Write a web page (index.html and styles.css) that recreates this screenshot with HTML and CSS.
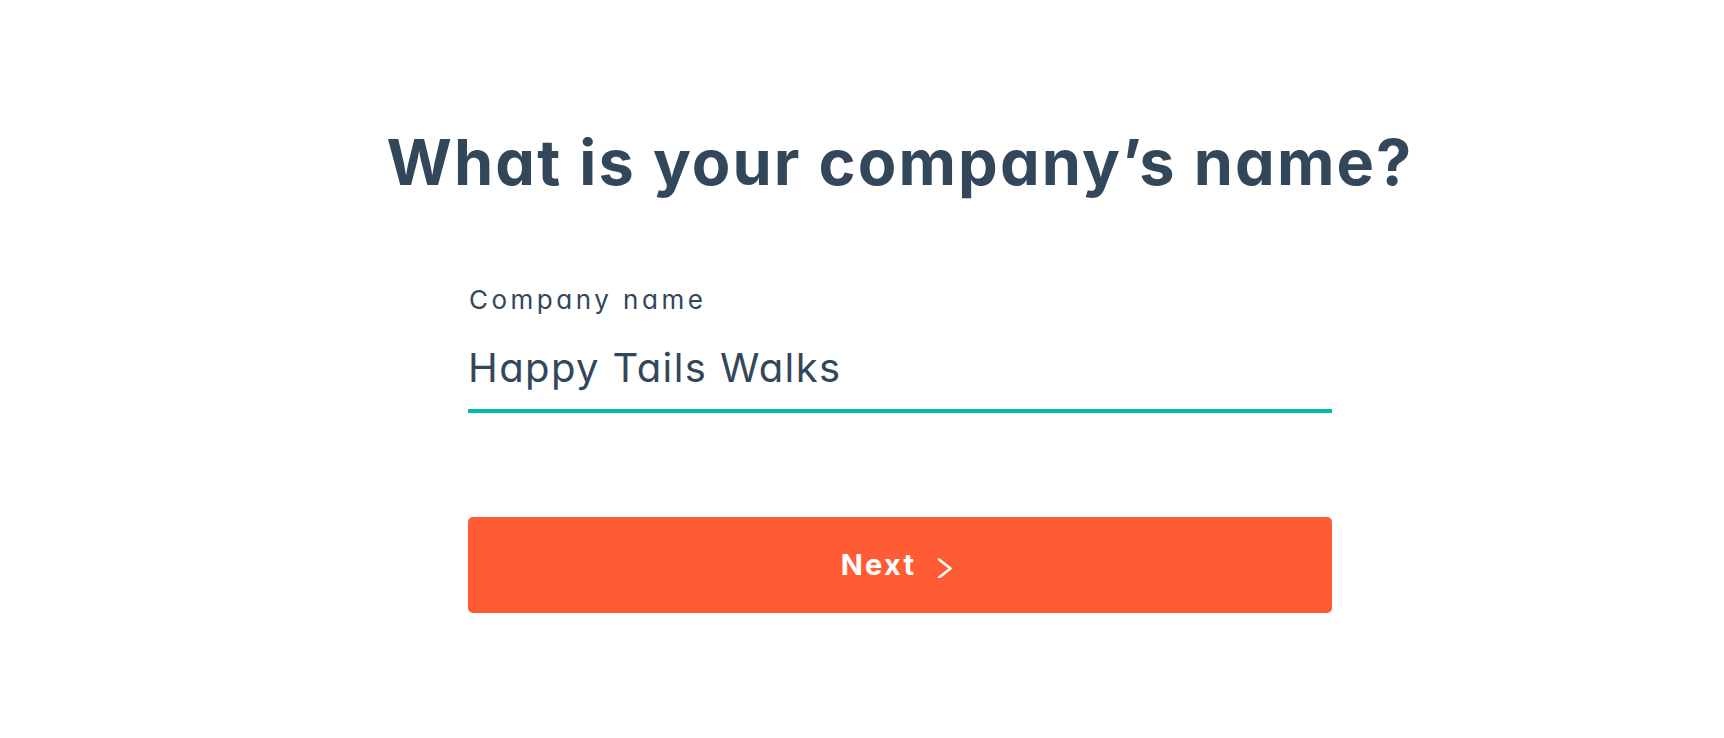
FILE: index.html
```html
<!DOCTYPE html>
<html lang="en">
<head>
<meta charset="utf-8">
<title>What is your company’s name?</title>
<link rel="stylesheet" href="styles.css">
</head>
<body>
<main class="page">
  <h1 class="title">What is your company’s name?</h1>
  <form class="form" onsubmit="return false">
    <label class="field">
      <span class="field-label">Company name</span>
      <input class="field-input" type="text" value="Happy Tails Walks">
    </label>
    <button class="next-btn" type="submit">
      <span class="next-text">Next</span>
      <svg class="next-icon" width="16" height="20" viewBox="0 0 16 20" aria-hidden="true">
        <polyline points="2,1.5 13.5,10.5 2,19.5" fill="none" stroke="#ffffff" stroke-width="2.6" stroke-linecap="round" stroke-linejoin="round"/>
      </svg>
    </button>
  </form>
</main>
</body>
</html>
```

FILE: styles.css
```css
* {
  box-sizing: border-box;
}

html, body {
  margin: 0;
  padding: 0;
  background: #ffffff;
}

body {
  font-family: "Inter", "Lato", "DejaVu Sans", sans-serif;
  font-feature-settings: "cv11" 1;
  color: #33475b;
}

.page {
  display: flex;
  flex-direction: column;
  align-items: center;
  padding: 124px 0 0 76px;
}

.title {
  margin: 0;
  font-size: 63px;
  line-height: 76px;
  font-weight: 700;
  letter-spacing: 2.1px;
  color: #33475b;
  white-space: nowrap;
}

.form {
  width: 864px;
  margin-top: 84px;
  display: flex;
  flex-direction: column;
}

.field {
  display: flex;
  flex-direction: column;
}

.field-label {
  font-size: 26px;
  line-height: 32px;
  letter-spacing: 3.5px;
  padding-left: 1px;
}

.field-input {
  box-sizing: content-box;
  margin: 28px 0 0;
  padding: 0 0 17px 0;
  height: 48px;
  line-height: 48px;
  font-family: inherit;
  font-feature-settings: "cv11" 1;
  font-size: 40px;
  letter-spacing: 1.4px;
  color: #33475b;
  border: 0;
  border-bottom: 4px solid #00bda5;
  outline: none;
  background: transparent;
  width: 100%;
}

.next-btn {
  margin-top: 104px;
  height: 96px;
  width: 100%;
  border: 0;
  border-radius: 5px;
  background: #ff5c35;
  color: #ffffff;
  display: flex;
  align-items: center;
  justify-content: center;
  gap: 21px;
  font-family: inherit;
  cursor: pointer;
  padding: 0 6px 0 0;
}

.next-text {
  font-size: 29px;
  font-weight: 700;
  line-height: 36px;
  letter-spacing: 2.2px;
}

.next-icon {
  display: block;
  margin-top: 6px;
}
```
